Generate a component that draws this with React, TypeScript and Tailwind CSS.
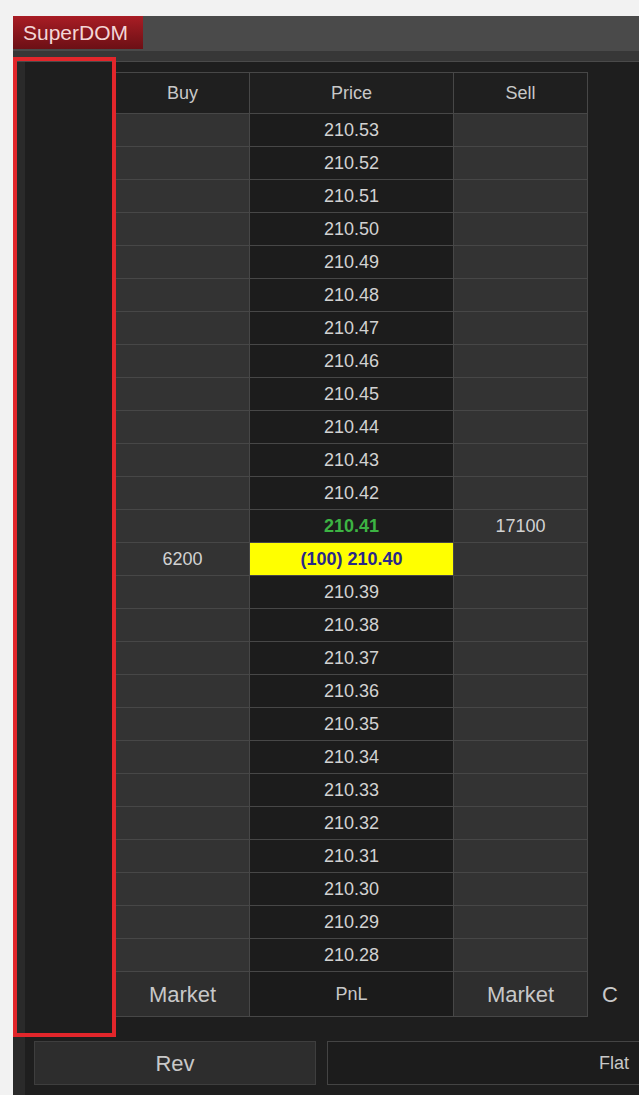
export default function App() {
  const prices = Array.from({ length: 26 }, (_, i) => (210.53 - i * 0.01).toFixed(2));

  return (
    <div className="h-[1095px] w-[639px] overflow-hidden bg-[#f2f2f2] pt-4 pl-[13px] font-['Liberation_Sans',Arial,sans-serif]">
      <div className="relative h-full bg-[#1e1e1e]">
        {/* Title bar */}
        <div className="flex h-[35px] bg-[#4a4a4a]">
          <div className="flex h-[33px] w-[130px] items-center bg-gradient-to-b from-[#a91d25] to-[#6c1015] pl-[10px] text-[21px] text-[#f3d6d6]">
            SuperDOM
          </div>
        </div>
        <div className="h-[10px] bg-[#373737]" />
        <div className="h-px bg-[#4a4a4a]" />

        {/* Body */}
        <div className="flex h-full flex-col border-l-[12px] border-[#2a2a2a]">
          <div className="flex pt-[10px]">
            <div className="w-[90px] shrink-0" />

            {/* Ladder */}
            <div className="grid w-[473px] shrink-0 grid-cols-[133px_203px_133px] gap-px border border-[#474747] bg-[#474747] text-[18px] text-[#d2d2d2]">
              <div className="flex h-[40px] items-center justify-center bg-[#1f1f1f] text-[#c8c8c8]">Buy</div>
              <div className="flex h-[40px] items-center justify-center bg-[#1f1f1f] text-[#c8c8c8]">Price</div>
              <div className="flex h-[40px] items-center justify-center bg-[#1f1f1f] text-[#c8c8c8]">Sell</div>

              {prices.map((p) => {
                const isAsk = p === "210.41";
                const isLast = p === "210.40";
                return (
                  <div key={p} className="contents">
                    <div className="flex h-[32px] items-center justify-center bg-[#333333]">
                      {isLast ? "6200" : ""}
                    </div>
                    {isLast ? (
                      <div className="flex h-[32px] items-center justify-center bg-[#ffff00] font-bold text-[#29288a]">
                        (100) 210.40
                      </div>
                    ) : (
                      <div
                        className={
                          isAsk
                            ? "flex h-[32px] items-center justify-center bg-[#1c1c1c] font-bold text-[#3cb443]"
                            : "flex h-[32px] items-center justify-center bg-[#1c1c1c]"
                        }
                      >
                        {p}
                      </div>
                    )}
                    <div className="flex h-[32px] items-center justify-center bg-[#333333]">
                      {isAsk ? "17100" : ""}
                    </div>
                  </div>
                );
              })}

              <div className="flex h-[44px] items-center justify-center bg-[#2e2e2e] text-[22px] text-[#c8c8c8]">Market</div>
              <div className="flex h-[44px] items-center justify-center bg-[#1b1b1b] text-[#c8c8c8]">PnL</div>
              <div className="flex h-[44px] items-center justify-center bg-[#2e2e2e] text-[22px] text-[#c8c8c8]">Market</div>
            </div>

            <div className="flex flex-1 flex-col justify-end pb-px">
              <div className="flex h-[44px] items-center pl-[14px] text-[22px] text-[#c8c8c8]">C</div>
            </div>
          </div>

          {/* Bottom buttons */}
          <div className="mt-[24px] flex gap-[11px] pl-[9px]">
            <div className="flex h-[44px] w-[282px] items-center justify-center border border-[#3e3e3e] bg-[#2d2d2d] text-[22px] text-[#c8c8c8]">
              Rev
            </div>
            <div className="flex h-[44px] flex-1 items-center justify-end border border-r-0 border-[#444444] bg-[#1c1c1c] pr-[10px] text-[18px] text-[#c8c8c8]">
              Flat
            </div>
          </div>
        </div>

        {/* Highlight annotation */}
        <div className="pointer-events-none absolute left-0 top-[41px] h-[980px] w-[103px] border-4 border-[#e2262b]" />
      </div>
    </div>
  );
}
